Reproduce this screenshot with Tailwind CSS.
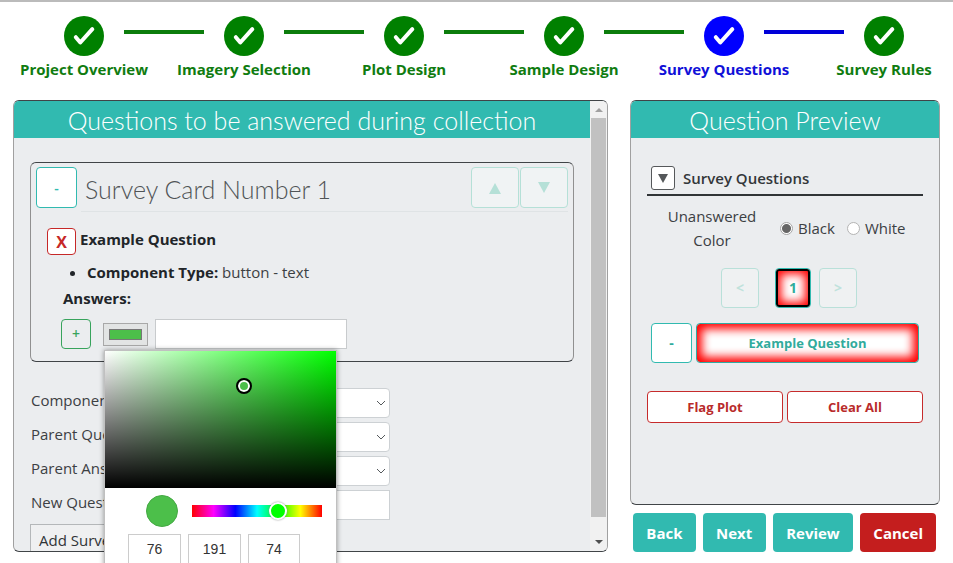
<!DOCTYPE html>
<html lang="en">
<head>
<meta charset="utf-8">
<title>Survey Questions</title>
<script src="https://cdn.jsdelivr.net/npm/@tailwindcss/browser@4"></script>
</head>
<body class="relative flex h-screen flex-col overflow-hidden border-t-2 border-[#bbbbbb] bg-white font-['Open_Sans','Noto_Sans',sans-serif] text-[15px] leading-6 text-[#212529]">

<svg class="hidden">
  <symbol id="check" viewBox="0 0 40 40"><path d="M11.800 21.200L16.300 26.500L28.300 13.200" fill="none" stroke="white" stroke-width="4" stroke-linecap="round" stroke-linejoin="round"/></symbol>
</svg>

<nav class="flex items-start pt-[14px] pr-[49px] pl-16 font-bold text-[#107c10]">
  <a href="#" class="flex w-10 flex-col items-center whitespace-nowrap"><svg class="size-10 rounded-full bg-[#008000]"><use href="#check"/></svg><span class="mt-px">Project Overview</span></a>
  <div class="mx-5 mt-[14px] h-1 flex-1 bg-[#0c7d0c]"></div>
  <a href="#" class="flex w-10 flex-col items-center whitespace-nowrap"><svg class="size-10 rounded-full bg-[#008000]"><use href="#check"/></svg><span class="mt-px">Imagery Selection</span></a>
  <div class="mx-5 mt-[14px] h-1 flex-1 bg-[#0c7d0c]"></div>
  <a href="#" class="flex w-10 flex-col items-center whitespace-nowrap"><svg class="size-10 rounded-full bg-[#008000]"><use href="#check"/></svg><span class="mt-px">Plot Design</span></a>
  <div class="mx-5 mt-[14px] h-1 flex-1 bg-[#0c7d0c]"></div>
  <a href="#" class="flex w-10 flex-col items-center whitespace-nowrap"><svg class="size-10 rounded-full bg-[#008000]"><use href="#check"/></svg><span class="mt-px">Sample Design</span></a>
  <div class="mx-5 mt-[14px] h-1 flex-1 bg-[#0c7d0c]"></div>
  <a href="#" class="flex w-10 flex-col items-center whitespace-nowrap text-[#1010d8]"><svg class="size-10 rounded-full bg-[#0000ff]"><use href="#check"/></svg><span class="mt-px">Survey Questions</span></a>
  <div class="mx-5 mt-[14px] h-1 flex-1 bg-[#0000d8]"></div>
  <a href="#" class="flex w-10 flex-col items-center whitespace-nowrap"><svg class="size-10 rounded-full bg-[#008000]"><use href="#check"/></svg><span class="mt-px">Survey Rules</span></a>
</nav>

<main class="mt-[19px] flex min-h-0 flex-1 gap-[22px] px-[13px] pb-[11px]">
  <section class="flex min-w-0 flex-1 overflow-hidden rounded-md border border-x-[#a0a0a0] border-y-[#404447] bg-[#ebedef]">
    <div class="min-w-0 flex-1">
      <h2 class="h-[37px] bg-[#31bab0] text-center font-[Lato] text-[25px] leading-[38px] font-light text-white">Questions to be answered during collection</h2>
      <div class="px-4 pt-6">
        <article class="rounded-md border border-x-[#909090] border-y-[#404447] pb-3">
          <div class="flex pt-1 pr-[5px] pl-[5px]">
            <button class="h-[41px] w-[41px] rounded border border-[#31bab0] bg-white text-sm font-semibold text-[#31bab0]">-</button>
            <div class="ml-1 flex h-[45px] flex-1 border-b border-[#dfe3e5]">
              <h2 class="flex-1 pl-1 font-[Lato] text-[25px] leading-[45px] font-light text-[#505456]">Survey Card Number 1</h2>
              <button disabled aria-label="Move up" class="flex h-[41px] w-12 items-center justify-center rounded border border-[#b5e0d7] bg-[#f0f3f4]"><svg class="size-3" viewBox="0 0 12 12"><path d="M6 1L12 12H0Z" fill="#b5e0d7"/></svg></button>
              <button disabled aria-label="Move down" class="ml-px flex h-[41px] w-12 items-center justify-center rounded border border-[#b5e0d7] bg-[#f0f3f4]"><svg class="size-3" viewBox="0 0 12 12"><path d="M0 0H12L6 11Z" fill="#b5e0d7"/></svg></button>
            </div>
          </div>
          <div class="pt-4 pl-4">
            <div class="flex items-start">
              <button class="h-[27px] w-[29px] rounded border border-[#c62828] bg-white text-base leading-6 font-bold text-[#c62828]">X</button>
              <h3 class="ml-1 leading-[22px] font-bold">Example Question</h3>
            </div>
            <ul class="mt-1 list-disc pl-10"><li class="leading-[26px]"><b>Component Type:</b> <span class="text-[#3c4043]">button - text</span></li></ul>
            <h3 class="pl-4 leading-[26px] font-bold">Answers:</h3>
            <div class="mt-2 flex items-center pl-[14px]">
              <button class="size-[30px] rounded border border-[#37a35c] text-sm leading-6 font-semibold text-[#37a35c]">+</button>
              <input type="color" value="#4cbf4a" aria-label="Answer color" class="ml-3 h-[23px] w-[45px] appearance-none border border-[#a8a8a8] bg-[#e2e4e4] p-1 [&::-webkit-color-swatch]:border [&::-webkit-color-swatch]:border-[#777777] [&::-webkit-color-swatch-wrapper]:p-px">
              <input type="text" aria-label="Answer" class="ml-[7px] h-[30px] w-48 border border-[#c8cbcd] bg-white px-2">
            </div>
          </div>
        </article>
        <form class="mt-[26px] text-[#3c4043]">
          <div class="mb-1 flex h-[30px] w-[360px] items-start"><label for="ctype" class="w-[150px] pl-px leading-6">Component Type:</label>
            <span class="relative flex-1"><select id="ctype" class="block h-[30px] w-full appearance-none rounded border border-[#cdd1d4] bg-white"><option></option></select><svg class="pointer-events-none absolute top-3 right-[4px] h-[6px] w-[10px]" viewBox="0 0 10 6"><path d="M1 1L5 5L9 1" fill="none" stroke="#55595c"/></svg></span></div>
          <div class="mb-1 flex h-[30px] w-[360px] items-start"><label for="pq" class="w-[150px] pl-px leading-6">Parent Question:</label>
            <span class="relative flex-1"><select id="pq" class="block h-[30px] w-full appearance-none rounded border border-[#cdd1d4] bg-white"><option></option></select><svg class="pointer-events-none absolute top-3 right-[4px] h-[6px] w-[10px]" viewBox="0 0 10 6"><path d="M1 1L5 5L9 1" fill="none" stroke="#55595c"/></svg></span></div>
          <div class="mb-1 flex h-[30px] w-[360px] items-start"><label for="pa" class="w-[150px] pl-px leading-6">Parent Answer:</label>
            <span class="relative flex-1"><select id="pa" class="block h-[30px] w-full appearance-none rounded border border-[#cdd1d4] bg-white"><option></option></select><svg class="pointer-events-none absolute top-3 right-[4px] h-[6px] w-[10px]" viewBox="0 0 10 6"><path d="M1 1L5 5L9 1" fill="none" stroke="#55595c"/></svg></span></div>
          <div class="mb-1 flex h-[30px] w-[360px] items-start"><label for="nq" class="w-[150px] pl-px leading-6">New Question:</label>
            <input id="nq" type="text" class="h-[30px] min-w-0 flex-1 border border-[#cdd1d4] bg-white px-2"></div>
          <button type="button" class="h-8 border border-[#b4b7b9] bg-[#eff0f1] px-2 leading-7 text-[#303437]">Add Survey Question</button>
        </form>
      </div>
    </div>
    <div aria-hidden="true" class="flex w-[17px] shrink-0 flex-col bg-[#f1f1f1]">
      <div class="flex h-[17px] items-center justify-center"><svg class="h-1 w-2" viewBox="0 0 8 4"><path d="M4 0L8 4H0Z" fill="#a0a0a0"/></svg></div>
      <div class="mx-px flex-1 bg-[#c1c1c1]"></div>
      <div class="flex h-[34px] items-end justify-center pb-[7px]"><svg class="h-1 w-2" viewBox="0 0 8 4"><path d="M0 0H8L4 4Z" fill="#505050"/></svg></div>
    </div>
  </section>

  <aside class="flex w-[310px] shrink-0 flex-col">
    <section class="flex-1 overflow-hidden rounded-md border border-x-[#a0a0a0] border-y-[#404447] bg-[#ebedef]">
      <h2 class="h-[37px] bg-[#31bab0] text-center font-[Lato] text-[25px] leading-[38px] font-light text-white">Question Preview</h2>
      <div class="px-4 pt-7">
        <div class="flex items-center border-b-2 border-[#303436] pb-1 pl-1">
          <button aria-label="Collapse" class="flex size-6 items-center justify-center rounded-[3px] border border-[#55585a] bg-white"><svg class="h-[9px] w-[10px]" viewBox="0 0 10 9"><path d="M0 0H10L5 9Z" fill="#55585a"/></svg></button>
          <h3 class="ml-2 leading-5 font-semibold text-[#33373a]">Survey Questions</h3>
        </div>
        <fieldset class="mt-2 flex items-center pl-3 text-[#3c4043]">
          <div class="w-[106px] text-center">Unanswered Color</div>
          <input type="radio" name="uc" id="black" checked class="ml-[15px] size-[13px] appearance-none rounded-full border border-[#a4a4a4] bg-white [background-image:radial-gradient(circle,#666666_4px,#ffffff_5px)]"><label for="black" class="ml-[5px]">Black</label>
          <input type="radio" name="uc" id="white" class="ml-3 size-[13px] appearance-none rounded-full border border-[#b4b4b4] bg-white"><label for="white" class="ml-[5px]">White</label>
        </fieldset>
        <div class="mt-4 flex justify-center pl-2 text-sm font-bold">
          <button disabled class="h-10 w-[38px] rounded border border-[#b9e0d9] bg-[#eff1f2] text-[#bfe2dc]">&lt;</button>
          <button class="mr-2 ml-4 h-10 w-9 rounded border border-[#31bab0] bg-white text-[#31ab9c] shadow-[inset_0_0_0_2px_black,inset_0_0_10px_5px_red]">1</button>
          <button disabled class="h-10 w-[38px] rounded border border-[#b9e0d9] bg-[#eff1f2] text-[#bfe2dc]">&gt;</button>
        </div>
        <div class="mt-[15px] flex gap-1 px-1 text-sm font-bold text-[#31ab9c]">
          <button class="h-10 w-[41px] rounded border border-[#31bab0] bg-white">-</button>
          <button class="h-10 flex-1 rounded border border-[#31aba2] bg-white text-[13px] shadow-[inset_0_0_10px_5px_red]">Example Question</button>
        </div>
        <div class="mt-7 grid grid-cols-2 gap-1 text-[13px] font-bold text-[#b92b2b]">
          <button class="h-8 rounded border border-[#c62b2b] bg-white">Flag Plot</button>
          <button class="h-8 rounded border border-[#c62b2b] bg-white">Clear All</button>
        </div>
      </div>
    </section>
    <div class="mt-2 mr-1 ml-[3px] flex gap-[7px] font-bold text-white">
      <button class="h-[39px] flex-[63] rounded bg-[#31bab0]">Back</button>
      <button class="h-[39px] flex-[63] rounded bg-[#31bab0]">Next</button>
      <button class="h-[39px] flex-[81] rounded bg-[#31bab0]">Review</button>
      <button class="h-[39px] flex-[76] rounded bg-[#c41e1e]">Cancel</button>
    </div>
  </aside>
</main>

<div role="dialog" aria-label="Color picker" class="absolute top-[348px] left-[104px] w-[233px] border border-[#c0c0c0] bg-white font-['Liberation_Sans',sans-serif] shadow-[0_0_5px_rgba(0,0,0,0.4)]">
  <div class="relative h-[137px] [background-image:linear-gradient(to_top,#000,transparent),linear-gradient(to_right,#fff,#00ff00)]">
    <div class="absolute top-[27px] left-[131px] size-4 rounded-full border-2 border-black bg-[#4cbf4a] shadow-[inset_0_0_0_2px_white]"></div>
  </div>
  <div class="flex items-center pt-[7px] pl-[41px]">
    <div class="size-8 rounded-full border border-[#45a944] bg-[#4cbf4a]"></div>
    <input type="range" aria-label="Hue" min="0" max="100" value="69" class="ml-[14px] h-[18px] w-[130px] appearance-none bg-transparent [&::-webkit-slider-runnable-track]:h-3 [&::-webkit-slider-runnable-track]:bg-[linear-gradient(to_right,#f00,#f0f,#00f,#0ff,#0f0,#ff0,#f00)] [&::-webkit-slider-thumb]:-mt-[3px] [&::-webkit-slider-thumb]:size-[18px] [&::-webkit-slider-thumb]:appearance-none [&::-webkit-slider-thumb]:rounded-full [&::-webkit-slider-thumb]:border-2 [&::-webkit-slider-thumb]:border-white [&::-webkit-slider-thumb]:bg-[#00ff00] [&::-webkit-slider-thumb]:shadow-[0_0_2px_#888888]">
  </div>
  <div class="flex gap-[7px] pt-[7px] pb-4 pl-[23px] text-sm text-[#333333]">
    <input aria-label="Red" value="76" class="h-[30px] w-[53px] border border-[#cccccc] text-center">
    <input aria-label="Green" value="191" class="h-[30px] w-[53px] border border-[#cccccc] text-center">
    <input aria-label="Blue" value="74" class="h-[30px] w-[52px] border border-[#cccccc] text-center">
  </div>
</div>
</body>
</html>
